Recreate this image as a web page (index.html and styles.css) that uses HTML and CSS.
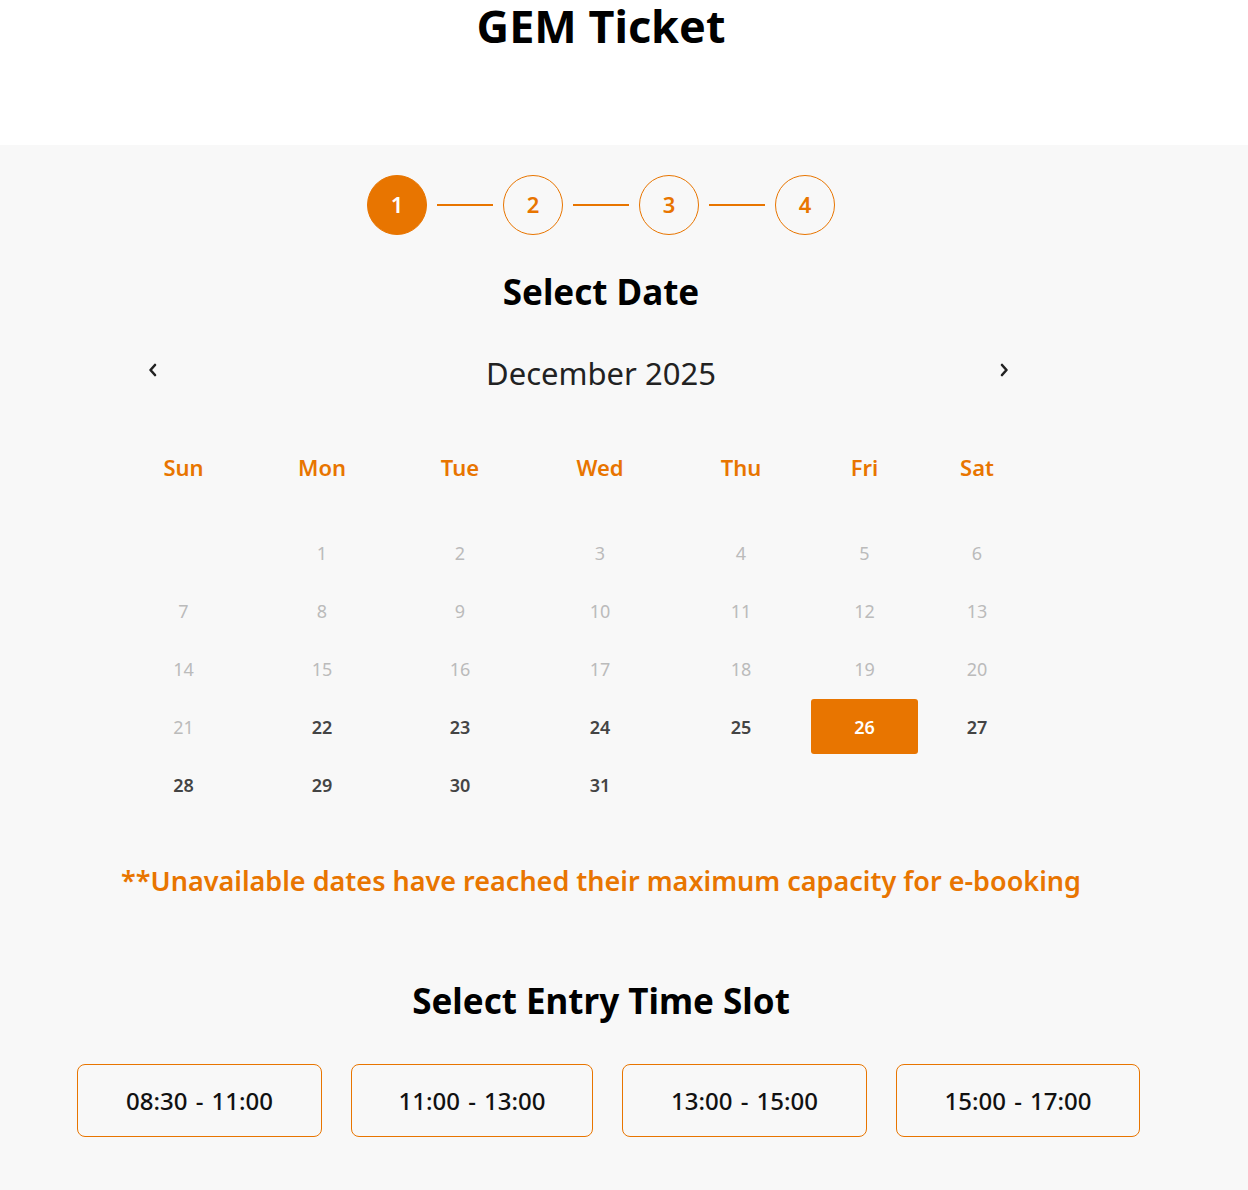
FILE: index.html
```html
<!DOCTYPE html>
<html lang="en">
<head>
<meta charset="utf-8">
<title>GEM Ticket</title>
<link rel="stylesheet" href="styles.css">
</head>
<body>
<header class="site-header">
  <div class="wrap">
    <h1 class="site-title">GEM Ticket</h1>
  </div>
</header>
<main class="booking">
  <div class="wrap">
    <ol class="stepper">
      <li class="step step-active">1</li>
      <li class="step-line"></li>
      <li class="step">2</li>
      <li class="step-line"></li>
      <li class="step">3</li>
      <li class="step-line"></li>
      <li class="step">4</li>
    </ol>

    <h2 class="section-title date-title">Select Date</h2>

    <div class="month-nav">
      <div class="nav-cell nav-prev">
        <button class="nav-btn" aria-label="Previous month">
          <svg width="10" height="14" viewBox="0 0 10 14"><path d="M7 2 L2.5 7 L7 12" fill="none" stroke="#222" stroke-width="2.6" stroke-linecap="round" stroke-linejoin="round"/></svg>
        </button>
      </div>
      <div class="month-title">December 2025</div>
      <div class="nav-cell nav-next">
        <button class="nav-btn" aria-label="Next month">
          <svg width="10" height="14" viewBox="0 0 10 14"><path d="M3 2 L7.5 7 L3 12" fill="none" stroke="#222" stroke-width="2.6" stroke-linecap="round" stroke-linejoin="round"/></svg>
        </button>
      </div>
    </div>

    <div class="calendar">
      <div class="weekday">Sun</div>
      <div class="weekday">Mon</div>
      <div class="weekday">Tue</div>
      <div class="weekday">Wed</div>
      <div class="weekday">Thu</div>
      <div class="weekday">Fri</div>
      <div class="weekday">Sat</div>

      <div class="day empty"></div>
      <div class="day off">1</div>
      <div class="day off">2</div>
      <div class="day off">3</div>
      <div class="day off">4</div>
      <div class="day off">5</div>
      <div class="day off">6</div>

      <div class="day off">7</div>
      <div class="day off">8</div>
      <div class="day off">9</div>
      <div class="day off">10</div>
      <div class="day off">11</div>
      <div class="day off">12</div>
      <div class="day off">13</div>

      <div class="day off">14</div>
      <div class="day off">15</div>
      <div class="day off">16</div>
      <div class="day off">17</div>
      <div class="day off">18</div>
      <div class="day off">19</div>
      <div class="day off">20</div>

      <div class="day off">21</div>
      <div class="day on">22</div>
      <div class="day on">23</div>
      <div class="day on">24</div>
      <div class="day on">25</div>
      <div class="day on selected">26</div>
      <div class="day on">27</div>

      <div class="day on">28</div>
      <div class="day on">29</div>
      <div class="day on">30</div>
      <div class="day on">31</div>
    </div>

    <p class="note">**Unavailable dates have reached their maximum capacity for e-booking</p>

    <h2 class="section-title slot-title">Select Entry Time Slot</h2>

    <div class="slots">
      <button class="slot">08:30 - 11:00</button>
      <button class="slot">11:00 - 13:00</button>
      <button class="slot">13:00 - 15:00</button>
      <button class="slot">15:00 - 17:00</button>
    </div>
  </div>
</main>
</body>
</html>
```

FILE: styles.css
```css
* { box-sizing: border-box; }

html, body {
  margin: 0;
  padding: 0;
}

body {
  font-family: "Noto Sans", "Open Sans", "DejaVu Sans", sans-serif;
  color: #111;
  background: #f8f8f8;
}

.wrap {
  width: 1202px;
}

.site-header {
  background: #ffffff;
  height: 145px;
  padding-top: 3px;
}

.site-title {
  margin: 0;
  text-align: center;
  font-size: 45px;
  line-height: 46px;
  font-weight: 700;
  color: #000;
}

.booking {
  background: #f8f8f8;
  padding: 30px 0 51px;
}

/* Stepper */
.stepper {
  list-style: none;
  margin: 0;
  padding: 0;
  display: flex;
  justify-content: center;
  align-items: center;
}

.step {
  width: 60px;
  height: 60px;
  border-radius: 50%;
  border: 1px solid #e87500;
  color: #e87500;
  display: flex;
  align-items: center;
  justify-content: center;
  font-size: 22px;
  font-weight: 600;
  padding-bottom: 3px;
}

.step-active {
  background: #e87500;
  color: #fff;
}

.step-line {
  width: 56px;
  height: 2px;
  margin: 0 10px;
  background: #e87500;
}

/* Titles */
.section-title {
  margin: 0;
  text-align: center;
  font-weight: 700;
  color: #000;
}

.date-title {
  margin-top: 34px;
  font-size: 35px;
  line-height: 46px;
}

/* Month navigation */
.month-nav {
  margin-top: 38px;
  display: grid;
  grid-template-columns: 1fr auto 1fr;
  align-items: start;
}

.nav-cell {
  display: flex;
}

.nav-prev {
  padding-left: 147px;
  padding-top: 10px;
}

.nav-next {
  justify-content: flex-end;
  padding-right: 192px;
  padding-top: 10px;
}

.nav-btn {
  background: none;
  border: 0;
  padding: 0;
  width: 12px;
  height: 14px;
  display: flex;
  align-items: center;
  justify-content: center;
  cursor: pointer;
}

.month-title {
  font-size: 31px;
  line-height: 40px;
  font-weight: 400;
  color: #222;
}

/* Calendar */
.calendar {
  margin-top: 58px;
  margin-left: 114px;
  width: 922px;
  display: grid;
  grid-template-columns: 139px 138px 138px 142px 140px 107px 118px;
  grid-template-rows: 71px;
  grid-auto-rows: 55px;
  row-gap: 3px;
}

.weekday {
  align-self: start;
  padding-top: 1px;
  text-align: center;
  font-size: 22px;
  line-height: 30px;
  font-weight: 600;
  color: #e87500;
}

.day {
  display: flex;
  align-items: center;
  justify-content: center;
  font-size: 18px;
  border-radius: 3px;
}

.day.off {
  color: #bbbbbb;
  font-weight: 400;
}

.day.on {
  color: #444;
  font-weight: 600;
}

.day.selected {
  background: #e87500;
  color: #fff;
}

/* Note */
.note {
  margin: 51px 0 0;
  text-align: center;
  font-size: 27px;
  line-height: 36px;
  font-weight: 600;
  color: #e87500;
}

.slot-title {
  margin-top: 80px;
  font-size: 35px;
  line-height: 44px;
}

/* Slots */
.slots {
  margin-top: 41px;
  padding-left: 77px;
  display: grid;
  grid-template-columns: 245px 242px 245px 244px;
  column-gap: 29px;
}

.slot {
  height: 73px;
  border: 1px solid #e87500;
  border-radius: 8px;
  background: transparent;
  font-family: inherit;
  font-size: 24px;
  font-weight: 500;
  color: #111;
  cursor: pointer;
  word-spacing: 2px;
}
```
